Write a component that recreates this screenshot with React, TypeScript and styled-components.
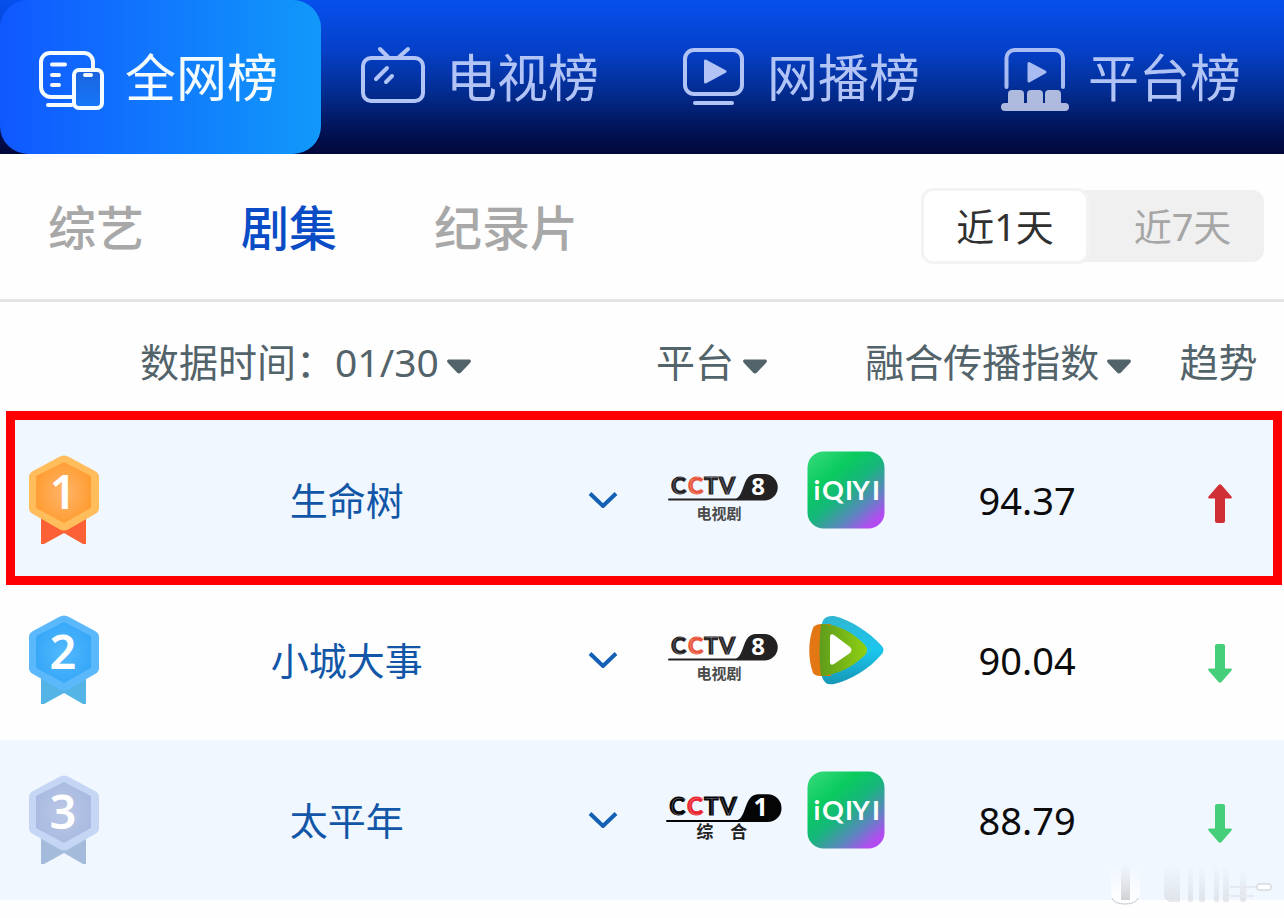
import React, { useState } from "react";
import styled, { createGlobalStyle } from "styled-components";

const GlobalStyle = createGlobalStyle`
  * { box-sizing: border-box; }
  body {
    margin: 0;
    background: #fefefe;
    font-family: "Noto Sans", "Noto Sans CJK SC", sans-serif;
  }
  button, select {
    font-family: inherit;
    border: 0;
    padding: 0;
    background: none;
    cursor: pointer;
  }
`;

const Page = styled.main`
  position: relative;
  width: 100%;
  padding-bottom: 18px;
  overflow: hidden;
`;

const TopTabs = styled.nav`
  display: grid;
  grid-template-columns: repeat(4, 1fr);
  background: linear-gradient(180deg, #0650ee 0%, #0540c8 33%, #032c90 60%, #02155c 82%, #02073a 100%);
`;

const TopTab = styled.button<{ $active: boolean }>`
  display: flex;
  align-items: center;
  justify-content: center;
  gap: 19px;
  height: 154px;
  padding-right: 5px;
  border-radius: 28px;
  font-size: 51px;
  line-height: 60px;
  white-space: nowrap;
  color: ${(p) => (p.$active ? "#f4fbff" : "#b2c4f6")};
  background: ${(p) => (p.$active ? "linear-gradient(90deg, #1058ff, #1199fa)" : "none")};
`;

const TabIcon = styled.svg`
  width: 68px;
  height: 68px;
  flex: none;
  fill: none;
  stroke: currentColor;
  stroke-width: 4;
  stroke-linecap: round;
  stroke-linejoin: round;
`;

const FilterBar = styled.section`
  display: flex;
  align-items: center;
  justify-content: space-between;
  height: 148px;
  padding: 0 20px 0 48px;
  border-bottom: 3px solid #e4e4e4;
`;

const Categories = styled.div`
  display: flex;
  gap: 97px;
  padding-top: 2px;
`;

const Category = styled.button<{ $active: boolean }>`
  font-size: 48px;
  line-height: 60px;
  font-weight: 500;
  white-space: nowrap;
  color: ${(p) => (p.$active ? "#0a4cc6" : "#a8a8a8")};
`;

const Segment = styled.div`
  display: flex;
  align-items: center;
  height: 72px;
  margin-bottom: 2px;
  border-radius: 12px;
  background: #f0f0f0;
`;

const SegmentButton = styled.button<{ $active: boolean }>`
  width: ${(p) => (p.$active ? 168 : 175)}px;
  height: ${(p) => (p.$active ? 76 : 72)}px;
  border: ${(p) => (p.$active ? "3px solid #f3f3f3" : "0")};
  border-radius: 12px;
  font-size: 38px;
  line-height: 48px;
  color: ${(p) => (p.$active ? "#303030" : "#a6a6a6")};
  background: ${(p) => (p.$active ? "#ffffff" : "transparent")};
  padding-left: ${(p) => (p.$active ? 0 : 12)}px;
`;

const Table = styled.table`
  width: 100%;
  table-layout: fixed;
  border-collapse: collapse;
  font-size: 38px;
  line-height: 48px;
`;

const Col = styled.col<{ $share: number }>`
  width: ${(p) => p.$share}%;
`;

const HeadCell = styled.th<{ $indent: number }>`
  height: 118px;
  padding: 2px 0 0 ${(p) => p.$indent}px;
  font-size: 39px;
  font-weight: 400;
  text-align: left;
  white-space: nowrap;
  color: #53636a;
`;

const HeadControl = styled.label`
  display: flex;
  align-items: center;
`;

const HeadSelect = styled.select`
  appearance: none;
  margin-right: 8px;
  font-size: 39px;
  line-height: 48px;
  color: inherit;
`;

const SortButton = styled.button`
  display: flex;
  align-items: center;
  gap: 8px;
  font-size: 39px;
  line-height: 48px;
  white-space: nowrap;
  color: inherit;
`;

const CaretIcon = styled.svg`
  width: 24px;
  height: 16px;
  margin-top: 10px;
  fill: currentColor;
`;

const Row = styled.tr<{ $shaded: boolean; $framed: boolean }>`
  position: relative;
  z-index: 0;
  background: ${(p) => (p.$shaded && !p.$framed ? "#f0f7ff" : "none")};

  &::after {
    content: ${(p) => (p.$framed ? '""' : "none")};
    position: absolute;
    inset: -9px 2px -5px 6px;
    z-index: -1;
    border: 9px solid #fe0000;
    background: #f0f7ff;
  }
`;

const Cell = styled.td`
  height: 160px;
  padding: 0;
  text-align: center;
  vertical-align: middle;

  > svg {
    display: block;
    margin: 0 auto;
  }
`;

const TitleLink = styled.a`
  color: #1256a8;
  text-decoration: none;
`;

const ExpandButton = styled.button`
  display: block;
  margin: 0 auto;
  color: #1360b4;
`;

const Platforms = styled.div`
  display: flex;
  align-items: center;
  padding-left: 24px;
  gap: 21px;
`;

const ChannelLogo = styled.svg`
  width: 120px;
  height: 54px;
  overflow: visible;
`;

const AppLogo = styled.svg`
  width: 78px;
  height: 78px;
  margin-bottom: 20px;
`;

const Score = styled.span`
  color: #0c0c0c;
`;

const Watermark = styled.svg`
  position: absolute;
  right: 8px;
  bottom: 10px;
  width: 170px;
  height: 50px;
`;

const AllNetIcon = () => (
  <TabIcon viewBox="0 0 68 68" aria-hidden="true">
    <defs>
      <linearGradient id="phone" x1="0" y1="0" x2="0" y2="1">
        <stop offset="0" stopColor="#1c62dc" />
        <stop offset="1" stopColor="#1478fa" />
      </linearGradient>
    </defs>
    <path d="M35 54H13a10 10 0 0 1-10-10V19A9 9 0 0 1 12 10H46a9 9 0 0 1 9 9v6" />
    <rect x="36" y="27" width="28" height="38" rx="5" fill="url(#phone)" />
    <path d="M10 62H34M14 21.500H27M14 32H21M14 42H21M47 32H53" />
  </TabIcon>
);

const TvIcon = () => (
  <TabIcon viewBox="0 0 68 68" aria-hidden="true">
    <rect x="4" y="15" width="60" height="43" rx="8" />
    <path d="M21 6L29 14M49 6L40 14M28 25L17 36M33 33L27 39" />
  </TabIcon>
);

const StreamIcon = () => (
  <TabIcon viewBox="0 0 68 68" aria-hidden="true">
    <rect x="5" y="7" width="57" height="44" rx="9" />
    <path d="M25.500 18V39L45 28.500Z" fill="currentColor" strokeWidth="3" />
    <path d="M15 60H52" />
  </TabIcon>
);

const PlatformIcon = () => (
  <TabIcon viewBox="0 0 68 68" aria-hidden="true" opacity="0.95">
    <path d="M5.500 44V15a8 8 0 0 1 8-8H54a8 8 0 0 1 8 8V44" />
    <path d="M28 20.500V38L44 29Z" fill="currentColor" strokeWidth="3" />
    <g fill="#b9c2e4" stroke="none">
      <rect x="7" y="47" width="16" height="16" rx="4" />
      <rect x="26" y="47" width="16" height="16" rx="4" />
      <rect x="44" y="47" width="16" height="16" rx="4" />
      <rect x="0" y="60" width="68" height="8" rx="4" />
    </g>
  </TabIcon>
);

const Caret = () => (
  <CaretIcon viewBox="0 0 24 16" aria-hidden="true">
    <path d="M2 .5H22c2 0 2.600 1.800 1.200 3.200L14 13.500c-1.300 1.400-2.700 1.400-4 0L.8 3.700C-.6 2.300 0 .5 2 .5Z" />
  </CaretIcon>
);

type Palette = { outer: string; inner: string; glow: string; ribbon: string };

const medals: Record<number, Palette> = {
  1: { outer: "#ffbd5c", inner: "#ff9e35", glow: "#ffb46a", ribbon: "#fb6134" },
  2: { outer: "#5bb9fb", inner: "#38a8f8", glow: "#52b9fd", ribbon: "#55b4e6" },
  3: { outer: "#c5d6f5", inner: "#a9bbe2", glow: "#bcc8e6", ribbon: "#a5bbdb" },
};

const Medal = ({ rank }: { rank: number }) => {
  const c = medals[rank];
  return (
    <svg width="72" height="92" viewBox="0 0 72 92" role="img" aria-label={`第${rank}名`}>
      <defs>
        <radialGradient id={`medal${rank}`}>
          <stop offset="0" stopColor={c.glow} />
          <stop offset="1" stopColor={c.inner} />
        </radialGradient>
      </defs>
      <path d="M13 62H58V90H55L36 79 16 90H13Z" fill={c.ribbon} />
      <path d="M31 3q5-3 10 0L67 17q4 2 4 6V54q0 4-4 6L41 75q-5 3-10 0L5 60q-4-2-4-6V23q0-4 4-6Z" fill={c.outer} />
      <path d="M36 8L63 22V54L36 69 8 54V22Z" fill={`url(#medal${rank})`} />
      <text x="35" y="55" textAnchor="middle" fontSize="47" fontWeight="600" fill="#fff">
        {rank}
      </text>
    </svg>
  );
};

const letters: [string, number, boolean][] = [
  ["C", 3, false],
  ["T", 36, false],
  ["V", 51, false],
  ["C", 20, true],
];

const Cctv = ({ channel }: { channel: 1 | 8 }) => {
  const main = channel === 8;
  const ink = main ? "#242122" : "#050505";
  const red = main ? "#e8553c" : "#ea2430";
  return (
    <ChannelLogo
      viewBox={main ? "-2 0 120 54" : "0 0 114 51"}
      role="img"
      aria-label={`CCTV-${channel}`}
      fontFamily='"Noto Sans CJK SC", sans-serif'
    >
      <path d="M1 25.500H68C77 22 74 1 88 1H96.500a13.250 13.250 0 0 1 0 26.500H1a1 1 0 0 1 0-2Z" fill={ink} />
      {letters.map(([ch, x, isRed]) => (
        <g key={x} fontSize="23" fontFamily="Lato, sans-serif">
          <text x={x} y="21" fontWeight="900" fill={isRed ? red : ink} stroke={isRed ? red : ink} strokeWidth="1">
            {ch}
          </text>
          <text x={x + 1} y="21" fontWeight="100" fill={isRed ? "#fbd5cf" : "#dedfe2"}>
            {ch}
          </text>
        </g>
      ))}
      <text x="90" y="22" textAnchor="middle" fontSize="24" fontWeight="700" fill="#fff" fontFamily="Noto Sans">
        {channel}
      </text>
      {main ? (
        <text x="51" y="46" textAnchor="middle" fontSize="15" fontWeight="700" fill="#4a4a4a">
          电视剧
        </text>
      ) : (
        <text y="43" fontSize="16" fontWeight="700" fill="#222">
          <tspan x="29">综</tspan>
          <tspan x="61">合</tspan>
        </text>
      )}
    </ChannelLogo>
  );
};

const Iqiyi = () => (
  <AppLogo viewBox="0 0 78 78" role="img" aria-label="iQIYI">
    <defs>
      <linearGradient id="iqiyi" x1="0.1" y1="0" x2="0.95" y2="1">
        <stop offset="0" stopColor="#32d878" />
        <stop offset="0.28" stopColor="#0acb5e" />
        <stop offset="0.5" stopColor="#16b67c" />
        <stop offset="0.72" stopColor="#5a87bd" />
        <stop offset="0.9" stopColor="#b04df0" />
        <stop offset="1" stopColor="#b84af5" />
      </linearGradient>
    </defs>
    <rect x="0.5" y="0.5" width="77" height="77" rx="16" fill="url(#iqiyi)" />
    <text y="49" textAnchor="middle" fontFamily="Lato, sans-serif" fontSize="27" fontWeight="700" fill="#fff">
      <tspan x="10">i</tspan>
      <tspan x="26">Q</tspan>
      <tspan x="42">I</tspan>
      <tspan x="54">Y</tspan>
      <tspan x="69">I</tspan>
    </text>
  </AppLogo>
);

const Tencent = () => (
  <AppLogo viewBox="0 0 78 78" role="img" aria-label="腾讯视频">
    <defs>
      <linearGradient id="txBlue" x1="0" y1="0" x2="0" y2="1">
        <stop offset="0" stopColor="#2fb6d2" />
        <stop offset="0.5" stopColor="#1cc6ee" />
        <stop offset="1" stopColor="#1596b4" />
      </linearGradient>
      <linearGradient id="txGreen" x1="0" y1="0" x2="1" y2="0">
        <stop offset="0" stopColor="#5f9c1c" />
        <stop offset="1" stopColor="#8fd012" />
      </linearGradient>
    </defs>
    <path d="M15 12Q17 4 27 5C44 9 62 21 74 34q5 5 0 10C62 58 44 69 27 73q-9 2-12-7Z" fill="url(#txBlue)" />
    <path d="M6 17q2-4 9-4H24V65H13q-5 0-7-3C1 49 1 30 6 17Z" fill="#e27714" />
    <path d="M14 13C31 13 47 22 58 34q4 5 0 10C47 55 31 64 14 65Q11 39 14 13Z" fill="url(#txGreen)" />
    <path d="M23 26q0-4 4-2L43 36q3 3 0 6L27 53q-4 2-4-2Z" fill="#fff" />
  </AppLogo>
);

const Trend = ({ up }: { up: boolean }) => (
  <svg width="26" height="48" viewBox="0 0 26 48" role="img" aria-label={up ? "上升" : "下降"}>
    {up ? (
      <path
        d="M11.500 9q1.500-1.500 3 0L24.500 20.500q1 2-1 2H18V45q0 2-2 2H10q-2 0-2-2V22.500H2.500q-2 0-1-2Z"
        fill="#d12f36"
      />
    ) : (
      <path
        d="M11.500 46q1.500 1.500 3 0L24.500 34.500q1-2-1-2H18V10q0-2-2-2H10q-2 0-2 2V32.500H2.500q-2 0-1 2Z"
        fill="#46cf7b"
      />
    )}
  </svg>
);

const topTabs = [
  { name: "全网榜", Icon: AllNetIcon },
  { name: "电视榜", Icon: TvIcon },
  { name: "网播榜", Icon: StreamIcon },
  { name: "平台榜", Icon: PlatformIcon },
];

const shows: { title: string; channel: 1 | 8; App: React.FC; score: string; up: boolean }[] = [
  { title: "生命树", channel: 8, App: Iqiyi, score: "94.37", up: true },
  { title: "小城大事", channel: 8, App: Tencent, score: "90.04", up: false },
  { title: "太平年", channel: 1, App: Iqiyi, score: "88.79", up: false },
];

export default function App() {
  const [tab, setTab] = useState("全网榜");
  const [category, setCategory] = useState("剧集");
  const [range, setRange] = useState("近1天");

  return (
    <Page>
      <GlobalStyle />
      <TopTabs>
        {topTabs.map(({ name, Icon }) => (
          <TopTab key={name} $active={tab === name} onClick={() => setTab(name)}>
            <Icon />
            <span>{name}</span>
          </TopTab>
        ))}
      </TopTabs>

      <FilterBar>
        <Categories>
          {["综艺", "剧集", "纪录片"].map((name) => (
            <Category key={name} $active={category === name} onClick={() => setCategory(name)}>
              {name}
            </Category>
          ))}
        </Categories>
        <Segment>
          {["近1天", "近7天"].map((name) => (
            <SegmentButton key={name} $active={range === name} onClick={() => setRange(name)}>
              {name}
            </SegmentButton>
          ))}
        </Segment>
      </FilterBar>

      <Table>
        <colgroup>
          {[10, 34, 6, 17, 3, 20, 10].map((share, i) => (
            <Col key={i} $share={share} />
          ))}
        </colgroup>
        <thead>
          <tr>
            <HeadCell colSpan={3} $indent={140}>
              <HeadControl>
                <span>数据时间：</span>
                <HeadSelect>
                  <option>01/30</option>
                </HeadSelect>
                <Caret />
              </HeadControl>
            </HeadCell>
            <HeadCell $indent={14}>
              <HeadControl>
                <HeadSelect aria-label="平台">
                  <option>平台</option>
                </HeadSelect>
                <Caret />
              </HeadControl>
            </HeadCell>
            <HeadCell colSpan={2} $indent={5}>
              <SortButton>
                融合传播指数
                <Caret />
              </SortButton>
            </HeadCell>
            <HeadCell $indent={24}>趋势</HeadCell>
          </tr>
        </thead>
        <tbody>
          {shows.map(({ title, channel, App: Logo, score, up }, i) => (
            <Row key={title} $shaded={i % 2 === 0} $framed={i === 0}>
              <Cell>
                <Medal rank={i + 1} />
              </Cell>
              <Cell>
                <TitleLink href="#">{title}</TitleLink>
              </Cell>
              <Cell>
                <ExpandButton aria-label={`展开${title}`}>
                  <svg width="32" height="20" viewBox="0 0 32 20" fill="none" stroke="currentColor" strokeWidth="4">
                    <path d="M3 5.500L16 18 29 5.500" />
                  </svg>
                </ExpandButton>
              </Cell>
              <Cell colSpan={2}>
                <Platforms>
                  <Cctv channel={channel} />
                  <Logo />
                </Platforms>
              </Cell>
              <Cell>
                <Score>{score}</Score>
              </Cell>
              <Cell>
                <Trend up={up} />
              </Cell>
            </Row>
          ))}
        </tbody>
      </Table>

      <Watermark viewBox="0 0 170 50" aria-hidden="true">
        <defs>
          <linearGradient id="fadeGrey" x1="0" y1="0" x2="0" y2="1">
            <stop offset="0" stopColor="#d4d6d9" stopOpacity="0" />
            <stop offset="1" stopColor="#cfd1d4" />
          </linearGradient>
          <linearGradient id="fadeWhite" x1="0" y1="0" x2="0" y2="1">
            <stop offset="0" stopColor="#fff" stopOpacity="0" />
            <stop offset="1" stopColor="#fff" />
          </linearGradient>
        </defs>
        <path d="M5 5H34V36Q32 46 19 46T5 36Z" fill="url(#fadeWhite)" />
        <path d="M6 40Q8 46 19 46T32 40" fill="none" stroke="#c6c8ca" strokeWidth="1" />
        <rect x="15" y="6" width="9" height="36" fill="url(#fadeGrey)" />
        <g fill="url(#fadeGrey)" opacity="0.5">
          <path d="M58 8H74V44H64Q58 42 58 36Z" />
          <rect x="82" y="8" width="5" height="36" rx="2" />
          <rect x="93" y="8" width="6" height="36" rx="2" />
          <rect x="108" y="8" width="5" height="36" rx="2" />
          <rect x="117" y="8" width="6" height="36" rx="2" />
          <rect x="134" y="12" width="6" height="32" rx="2" />
        </g>
        <path d="M124 29H150M124 38H148" stroke="#e6eaf0" strokeWidth="2" />
        <rect x="151" y="26" width="14" height="6" rx="2" fill="#fff" stroke="#c4c8cf" />
      </Watermark>
    </Page>
  );
}
